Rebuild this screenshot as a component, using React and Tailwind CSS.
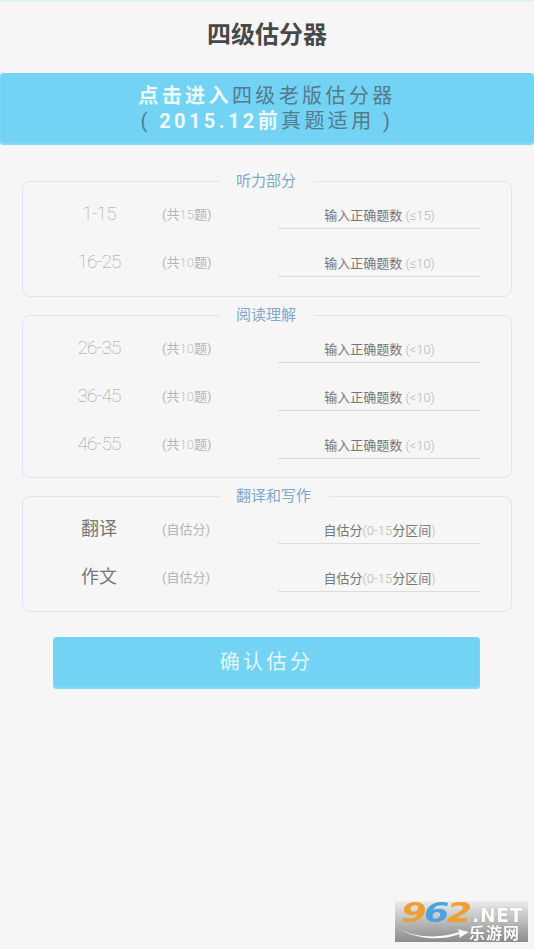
import React from 'react';

const FONT = 'font-["Roboto","Noto_Sans_CJK_SC",sans-serif]';

const SECTIONS = [
  {
    title: '听力部分',
    rows: [
      { no: '1-15', total: '15', max: '≤15' },
      { no: '16-25', total: '10', max: '≤10' },
    ],
  },
  {
    title: '阅读理解',
    tight: true,
    rows: [
      { no: '26-35', total: '10', max: '<10' },
      { no: '36-45', total: '10', max: '<10' },
      { no: '46-55', total: '10', max: '<10' },
    ],
  },
];

const Row = ({ label, labelClass, hint, placeholder }) => (
  <div className="flex h-[48px] items-start">
    <div className={`w-[139px] pl-[13px] text-center leading-[49px] ${labelClass}`}>{label}</div>
    <div className="w-[116px] pt-[16px] text-[13px] leading-[20px] text-[#b5b5b5]">{hint}</div>
    <div className="mt-[16px] flex h-[24px] w-[203px] items-start justify-center border-b border-[#dcdcdc] text-[13px] leading-[21px] text-[#777777]">
      {placeholder}
    </div>
  </div>
);

const Section = ({ title, tight, children }) => (
  <fieldset className={`mx-[22px] rounded-[8px] border border-[#dfe3f2] ${tight ? 'pb-[10px]' : 'pb-[11px]'}`}>
    <legend className="ml-[197px] pl-[16px] pr-[18px] text-[15px] leading-[20px] text-[#7fa8d0]">{title}</legend>
    <div className="-mt-[2px]">{children}</div>
  </fieldset>
);

const Watermark = () => (
  <div className='fixed bottom-[7px] right-[6px] flex h-[41px] w-[133px] flex-col bg-gradient-to-b from-[#ececec] to-[#8c8c8c] pl-[5px] font-["DejaVu_Sans","Noto_Sans_CJK_SC",sans-serif]'>
    <div className="flex h-[24px] items-end">
      <div className="flex w-[72px] shrink-0 origin-left scale-x-[1.35] items-end pl-[1px] text-[27px] font-bold italic leading-[24px] tracking-[-2px]">
        <span className="text-[#ee9f2f]">9</span>
        <span className="text-[#4aa3dc]">6</span>
        <span className="text-[#ee9f2f]">2</span>
      </div>
      <span className="text-[19px] font-bold leading-[20px] tracking-[0.5px] text-white [text-shadow:0_0_1px_#777777]">.NET</span>
    </div>
    <div className="flex h-[17px] items-center">
      <svg width="69" height="16" viewBox="0 0 72 16" className="shrink-0">
        <path d="M0 3 C18 13 45 12 62 6 L60 3 L72 6 L62 12 L62 8 C45 15 18 14 0 3 Z" fill="#ffffff" />
      </svg>
      <span className="text-[16px] font-bold leading-[17px] tracking-[1px] text-white [text-shadow:0_0_1px_#666666]">乐游网</span>
    </div>
  </div>
);

export default function App() {
  return (
    <div className={`relative h-[949px] w-[534px] overflow-hidden bg-[#f6f6f6] ${FONT}`}>
      <div className="h-[2px] bg-[#e3f1ee]" />
      <h1 className="flex h-[71px] items-center justify-center pb-[5px] text-[24px] font-bold text-[#484848]">四级估分器</h1>

      <button className="block h-[72px] w-full rounded-[4px] bg-[#72d3f4] text-center text-[20px] leading-[25px] tracking-[3.4px] text-[#557a8c] shadow-[inset_0_-2px_2px_#8adcf8]">
        <div><span className="font-bold text-[#eefaff]">点击进入</span>四级老版估分器</div>
        <div>( <span className="font-bold text-[#eefaff]">2015.12前</span>真题适用 )</div>
      </button>

      <div className="mt-[26px] flex flex-col gap-[8px]">
        {SECTIONS.map(s => (
          <Section key={s.title} title={s.title} tight={s.tight}>
            {s.rows.map(r => (
              <Row
                key={r.no}
                label={r.no}
                labelClass="text-[19px] font-thin tracking-[-0.8px] text-[#a0a0a0]"
                hint={<>(共<span className="font-light text-[#c4c4c4]">{r.total}</span>题)</>}
                placeholder={<>输入正确题数&nbsp;<span className="font-light text-[#b5b5b5]">({r.max})</span></>}
              />
            ))}
          </Section>
        ))}
        <Section title="翻译和写作">
          {['翻译', '作文'].map(t => (
            <Row
              key={t}
              label={t}
              labelClass="text-[18px] text-[#777777]"
              hint="(自估分)"
              placeholder={<>自估分<span className="font-light text-[#b5b5b5]">(0-15</span>分区间<span className="font-light text-[#b5b5b5]">)</span></>}
            />
          ))}
        </Section>
      </div>

      <button className="ml-[53px] mt-[25px] block h-[52px] w-[427px] rounded-[4px] bg-[#72d3f4] pb-[3px] text-[20px] tracking-[3.4px] text-[#e6f8ff] shadow-[inset_0_-2px_2px_#8adcf8]">
        确认估分
      </button>

      <Watermark />
    </div>
  );
}
